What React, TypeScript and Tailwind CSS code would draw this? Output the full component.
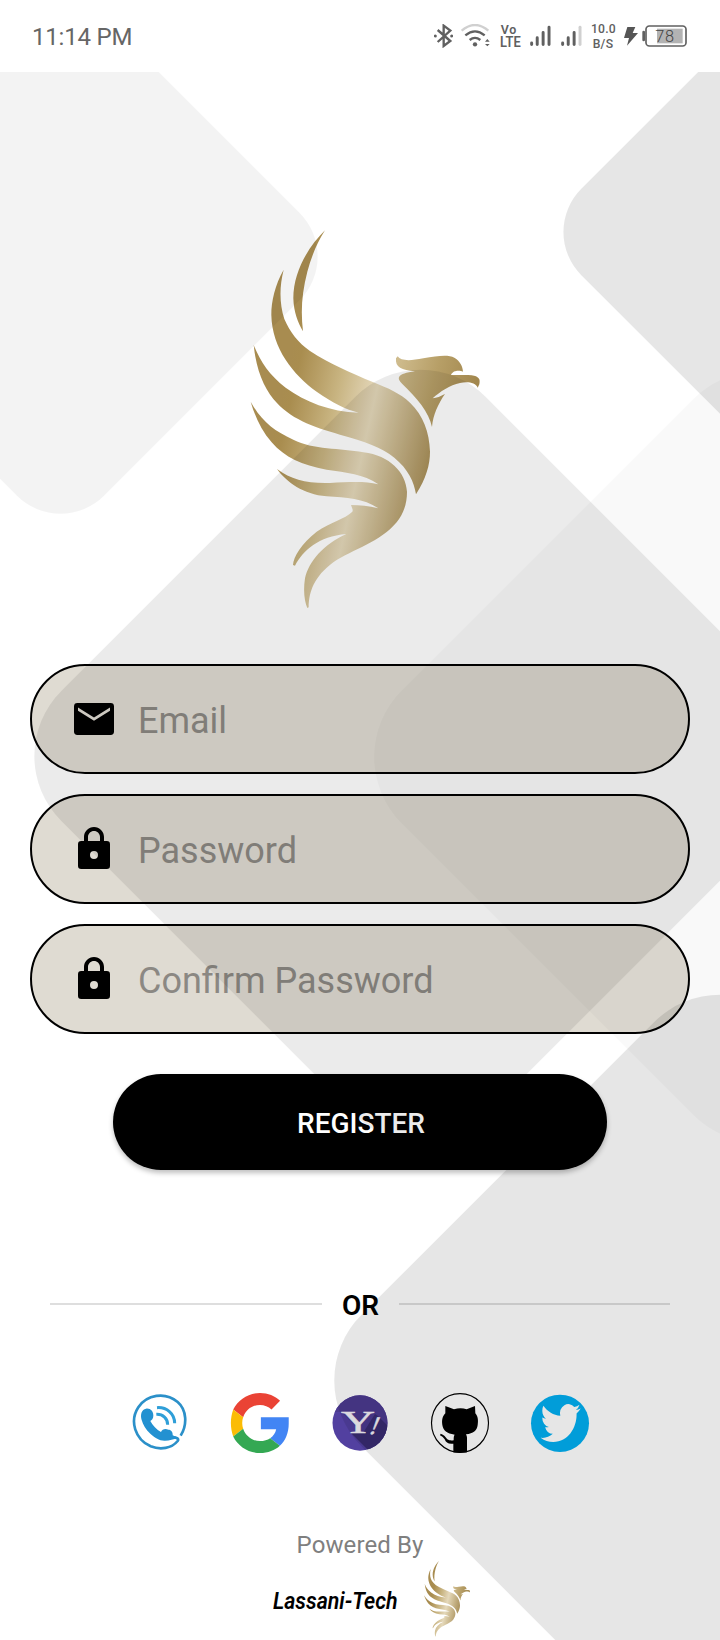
import { useId } from "react";

function Phoenix({ className }: { className: string }) {
  const id = useId().replace(/[^a-zA-Z0-9]/g, "");
  const body = `body${id}`;
  const head = `head${id}`;
  return (
    <svg viewBox="0 0 810 1215" className={className} aria-hidden="true">
      <defs>
        <linearGradient id={body} gradientUnits="userSpaceOnUse" x1="263" y1="60" x2="751" y2="170">
          <stop offset="0" stopColor="#a88c50" />
          <stop offset="0.06" stopColor="#a98d4f" />
          <stop offset="0.18" stopColor="#b79e65" />
          <stop offset="0.32" stopColor="#c8b481" />
          <stop offset="0.48" stopColor="#dccdaa" />
          <stop offset="0.55" stopColor="#e4d8ba" />
          <stop offset="0.63" stopColor="#d9caa6" />
          <stop offset="0.95" stopColor="#aa915b" />
        </linearGradient>
        <linearGradient id={head} gradientUnits="userSpaceOnUse" x1="500" y1="440" x2="740" y2="500">
          <stop offset="0" stopColor="#cfbc8e" />
          <stop offset="0.5" stopColor="#b79f67" />
          <stop offset="1" stopColor="#a2874e" />
        </linearGradient>
      </defs>
      <g fill={`url(#${body})`}>
        <path d="M285 46C235 95 190 170 190 250C191 290 204 325 219 349C212 290 215 235 232 170C245 122 262 82 285 46Z" />
        <path d="M161 164C135 210 124 258 124 300C126 400 190 480 260 530C308 564 348 583 386 593C300 590 225 560 167 518C117 480 92 440 71 390C78 460 100 515 130 552C180 612 245 634 330 659C405 679 455 697 493 728C535 763 552 800 558 838C588 790 600 750 600 710C598 650 580 602 540 563C510 535 475 520 430 502C360 472 300 447 240 408C205 384 180 352 163 312C148 266 148 215 161 164Z" />
        <path d="M62 560C75 605 95 648 125 682C165 728 215 750 290 764C350 773 400 776 445 808C405 798 360 801 300 804C230 806 185 794 141 762C170 802 220 838 290 844C350 848 400 850 445 880C415 872 390 870 363 870C366 880 370 884 367 890C345 912 300 922 260 950C215 985 190 1025 189 1050L195 1052C220 1005 265 965 349 957C280 988 236 1040 225 1090C219 1130 224 1160 232 1179L236 1177C237 1130 252 1085 310 1042C370 1002 450 982 500 922C524 892 531 860 531 830C527 772 480 722 400 712C330 698 250 705 190 674C130 648 92 615 62 560Z" />
      </g>
      <path
        fill={`url(#${head})`}
        d="M503 424C512 438 540 438 580 430C625 422 655 419 673 428C690 438 698 453 699 470C690 467 670 464 663 480C685 481 705 478 725 481C746 484 752 492 748 508L743 518C737 504 715 499 690 504C660 510 630 530 608 550C620 549 632 544 645 537C625 565 609 600 606 636C597 592 560 548 517 507C499 490 500 476 555 469C515 465 495 457 498 430Z"
      />
    </svg>
  );
}

/* Translucent rounded diamonds that tint everything beneath them. */
function Diamonds() {
  return (
    <svg
      viewBox="0 72 720 1568"
      className="pointer-events-none absolute left-0 top-[72px] h-[1568px] w-[720px]"
      aria-hidden="true"
    >
      <rect x="-139.5" y="56.5" width="400" height="400" rx="62" transform="rotate(45 60.5 256.5)" fillOpacity="0.047" />
      <rect x="621" y="32" width="400" height="400" rx="61" transform="rotate(45 821 232)" fillOpacity="0.098" />
      <rect x="120.5" y="456" width="600" height="600" rx="92" transform="rotate(45 420.5 756)" fillOpacity="0.078" />
      <rect x="459.5" y="457" width="600" height="600" rx="94" transform="rotate(45 759.5 757)" fillOpacity="0.024" />
      <rect x="420" y="1080.5" width="600" height="600" rx="93" transform="rotate(45 720 1380.5)" fillOpacity="0.098" />
    </svg>
  );
}

function StatusBar() {
  return (
    <header className="flex h-[72px] shrink-0 items-center pl-8 pr-[33px] text-[#666]">
      <span className="pt-[2px] text-[24px] leading-none tracking-[-0.2px]">11:14 PM</span>
      <div className="ml-auto flex h-6 items-center">
        <svg viewBox="42 72 57 72" className="h-6 w-[19px]" fill="none" stroke="#606060" strokeWidth="7">
          <path d="M53 90L91 123L71 138V77L91 92L53 126" />
          <circle cx="46" cy="108" r="4.500" fill="#606060" stroke="none" />
          <circle cx="95" cy="108" r="4.500" fill="#606060" stroke="none" />
        </svg>
        <svg viewBox="123 72 87 72" className="ml-2 h-6 w-[29px]" fill="none" stroke="#606060" strokeWidth="7">
          <path d="M125 92Q165 58 205 92" stroke="#d0d0d0" />
          <path d="M136 106Q165 82 194 106M149 120Q165 107 181 120" />
          <circle cx="165" cy="133" r="6.500" fill="#606060" stroke="none" />
          <path d="M195 125L202 117L209 125ZM195 132L202 139L209 132Z" fill="#606060" stroke="none" />
        </svg>
        <svg viewBox="238 72 64 72" className="ml-[10px] h-6 w-[21px] overflow-visible" fill="#606060">
          <text x="240" y="103" fontSize="38" fontWeight="600" textLength="48">Vo</text>
          <text x="238" y="141" fontSize="43" fontWeight="600" textLength="63" lengthAdjust="spacingAndGlyphs">LTE</text>
        </svg>
        <svg viewBox="330 72 64 72" className="ml-[9px] h-6 w-[21px]" stroke="#606060" strokeWidth="9" strokeLinecap="round">
          <path d="M335 129V134M352 113V134M370 97V134M388 81V134" />
        </svg>
        <svg viewBox="423 72 64 72" className="ml-[10px] h-6 w-[21px]" stroke="#606060" strokeWidth="9" strokeLinecap="round">
          <path d="M428 129V134M445 113V134M463 97V134" />
          <path d="M481 81V134" stroke="#d0d0d0" />
        </svg>
        <svg viewBox="514 69 76 78" className="ml-[9px] h-[26px] w-[25px] overflow-visible" fill="#606060">
          <text x="514" y="99" fontSize="37" fontWeight="500" textLength="75">10.0</text>
          <text x="519" y="144" fontSize="37" fontWeight="500" textLength="62">B/S</text>
        </svg>
        <svg viewBox="612 78 42 60" className="ml-2 h-5 w-[14px]" fill="#555">
          <path d="M622 81H646L638 99H654L621 137L627 114H612Z" />
        </svg>
        <svg viewBox="667 72 135 72" className="ml-1 h-6 w-[45px]">
          <path d="M672 96V120" stroke="#606060" strokeWidth="8" strokeLinecap="round" />
          <rect x="679" y="78" width="120" height="60" rx="10" fill="none" stroke="#606060" strokeWidth="5" />
          <rect x="712" y="86" width="77" height="44" fill="#b3b3b3" />
          <text x="707" y="125" fontSize="49" fontWeight="300" textLength="56" fill="#444">78</text>
        </svg>
      </div>
    </header>
  );
}

function MailIcon() {
  return (
    <svg viewBox="0 0 24 24" className="size-12 shrink-0">
      <path
        fillRule="evenodd"
        d="M3.700 4H20.300Q22 4 22 5.700V18.300Q22 20 20.300 20H3.700Q2 20 2 18.300V5.700Q2 4 3.700 4ZM4 6.200V7.850L12 12.850L20 7.850V6.200L12 11.200Z"
      />
    </svg>
  );
}

function LockIcon() {
  return (
    <svg viewBox="0 0 24 24" className="size-12 shrink-0">
      <path
        fillRule="evenodd"
        d="M18.400 8H17V6C17 3.240 14.760 1 12 1S7 3.240 7 6V8H5.600Q4 8 4 9.600V20.400Q4 22 5.600 22H18.400Q20 22 20 20.400V9.600Q20 8 18.400 8ZM12 17A2 2 0 1 1 12 13A2 2 0 0 1 12 17ZM15 8H9V6C9 4.340 10.340 3 12 3S15 4.340 15 6Z"
      />
    </svg>
  );
}

function Field({ label, type, icon }: { label: string; type: string; icon: React.ReactNode }) {
  return (
    <label className="flex h-[110px] items-center gap-5 rounded-full border-2 border-black bg-[#dfdbd2] pl-[38px] pr-10">
      {icon}
      <input
        type={type}
        placeholder={label}
        className="w-full bg-transparent pt-1 text-[36px] leading-[44px] outline-none placeholder:text-[#8b8883] placeholder:opacity-100"
      />
    </label>
  );
}

function PhoneIcon() {
  return (
    <svg viewBox="60 69 180 180" className="size-[60px]" fill="none">
      <path d="M212 197C232 165 231 120 203 96C165 64 110 74 85 112C58 153 75 208 122 229C152 241 185 235 203 213C207 207 202 202 187 201" stroke="#2b90c9" strokeWidth="8" />
      <path
        d="M95 150C90 133 95 118 108 116C121 114 130 123 130 137C130 146 125 150 121 153C128 167 140 179 153 186C156 178 166 174 175 179C184 179 189 187 188 196L204 204C190 208 179 212 165 212C150 213 132 202 121 191C107 179 99 164 95 150Z"
        fill="#2391d1"
      />
      <path d="M141 113C170 111 194 131 194 160" stroke="#2f9fd8" strokeWidth="9" />
      <path d="M139 133C159 132 173 146 173 164" stroke="#2f9fd8" strokeWidth="9" />
    </svg>
  );
}

function GoogleIcon() {
  return (
    <svg viewBox="0 0 48 48" preserveAspectRatio="none" className="h-[60px] w-[60px]">
      <path fill="#EA4335" d="M24 9.500c3.540 0 6.710 1.220 9.210 3.600l6.850-6.850C35.900 2.380 30.470 0 24 0 14.620 0 6.510 5.380 2.560 13.220l7.980 6.190C12.430 13.720 17.740 9.500 24 9.500z" />
      <path fill="#4285F4" d="M46.980 24.550c0-1.570 0-3.090 0-5.250H24.700v9.720h12.240c-.58 2.960-2.260 5.480-4.780 7.180l7.730 6c4.510-4.180 7.090-10.360 7.090-17.650z" />
      <path fill="#FBBC05" d="M10.530 28.590c-.48-1.450-.76-2.990-.76-4.590s.27-3.140.76-4.590l-7.980-6.190C1.420 16.460 .7 20.120 .7 24c0 3.880.72 7.540 1.860 10.780l7.970-6.190z" />
      <path fill="#34A853" d="M24 48c6.480 0 11.930-2.130 15.890-5.810l-7.730-6c-2.150 1.450-4.920 2.300-8.160 2.300-6.260 0-11.570-4.220-13.470-9.910l-7.980 6.190C6.510 42.620 14.620 48 24 48z" />
    </svg>
  );
}

function YahooIcon() {
  return (
    <svg viewBox="0 0 60 60" className="size-[60px]">
      <defs>
        <clipPath id="yahoo-disc">
          <ellipse cx="30" cy="30" rx="27.500" ry="27.700" />
        </clipPath>
      </defs>
      <g clipPath="url(#yahoo-disc)">
        <rect width="60" height="60" fill="#5240a0" />
        <path d="M11 19L52 60H60V0H0V19Z" fill="#4c3a90" />
        <path d="M21 40L42 61L70 45L48 23L45 21L33 40Z" fill="#392c72" />
      </g>
      <g fill="#f3f1f8" stroke="#f3f1f8" strokeWidth="0.500" fontFamily="'Liberation Serif', serif">
        <text x="11" y="40" fontSize="32" textLength="34" lengthAdjust="spacingAndGlyphs">Y</text>
        <text x="38" y="41" fontSize="25" transform="translate(16.400 0) skewX(-22)">!</text>
      </g>
    </svg>
  );
}

function GithubIcon() {
  return (
    <svg viewBox="240 69 180 180" className="size-[60px]">
      <ellipse cx="330" cy="159" rx="85.500" ry="88" fill="none" stroke="#000" strokeWidth="3.500" />
      <path d="M286 108L312 118C325 114 338 114 350 118L375 108L376 130C384 140 385 150 383 165C381 182 370 190 348 193C352 200 351 205 351 212V247C335 249 322 249 310 247V221C295 223 288 218 284 208C280 202 275 198 270 196L272 191C282 193 287 202 292 208C298 212 304 212 311 211C311 203 311 198 314 194C290 190 280 182 277 165C275 150 277 140 286 130Z" />
    </svg>
  );
}

function TwitterIcon() {
  return (
    <svg viewBox="540 69 180 180" className="size-[60px]">
      <ellipse cx="630" cy="160" rx="87" ry="86" fill="#02aff1" />
      <path
        fill="#fff"
        transform="translate(572 89) scale(5 5.850)"
        d="M23.953 4.570a10 10 0 01-2.825.775 4.958 4.958 0 002.163-2.723c-.951.555-2.005.959-3.127 1.184a4.920 4.920 0 00-8.384 4.482C7.690 8.095 4.067 6.130 1.640 3.162a4.822 4.822 0 00-.666 2.475c0 1.710.870 3.213 2.188 4.096a4.904 4.904 0 01-2.228-.616v.060a4.923 4.923 0 003.946 4.827 4.996 4.996 0 01-2.212.085 4.936 4.936 0 004.604 3.417 9.867 9.867 0 01-6.102 2.105c-.390 0-.779-.023-1.170-.067a13.995 13.995 0 007.557 2.209c9.053 0 13.998-7.496 13.998-13.985 0-.210 0-.420-.015-.630A9.935 9.935 0 0024 4.590z"
      />
    </svg>
  );
}

export default function App() {
  return (
    <div className="relative flex h-[1640px] w-[720px] flex-col overflow-hidden bg-white font-['Roboto',sans-serif]">
      <StatusBar />
      <main className="flex flex-col">
        <Phoenix className="ml-[230px] mt-[143px] h-[405px] w-[270px]" />
        <form className="mt-[44px] flex flex-col gap-5 px-[30px]">
          <Field label="Email" type="email" icon={<MailIcon />} />
          <Field label="Password" type="password" icon={<LockIcon />} />
          <Field label="Confirm Password" type="password" icon={<LockIcon />} />
          <button
            type="button"
            className="mt-5 h-24 w-[494px] self-center rounded-full bg-black pl-[2px] pt-1 text-[28px] font-medium text-white shadow-[0_3px_5px_rgba(0,0,0,0.25)]"
          >
            REGISTER
          </button>
        </form>
        <div className="mt-[116px] flex h-9 items-center px-[50px]">
          <span className="h-[2px] flex-1 bg-[#dedede]" />
          <span className="w-[77px] pl-px pt-1 text-center text-[28px] font-semibold leading-8 text-black">OR</span>
          <span className="h-[2px] flex-1 bg-[#dedede]" />
        </div>
        <nav className="mt-[71px] flex justify-center gap-10">
          <PhoneIcon />
          <GoogleIcon />
          <YahooIcon />
          <GithubIcon />
          <TwitterIcon />
        </nav>
      </main>
      <footer className="mt-[77px] flex flex-col items-center">
        <p className="h-7 pt-px text-[24px] leading-7 tracking-[0.1px] text-[#7f7f7f]">Powered By</p>
        <div className="flex h-[81px] w-full">
          <p className="ml-[273px] mt-[29px] w-[147px] origin-left scale-x-[0.89] whitespace-nowrap text-[24px] font-semibold italic leading-7 text-black">
            Lassani-Tech
          </p>
          <Phoenix className="h-[81px] w-[54px]" />
        </div>
      </footer>
      <Diamonds />
    </div>
  );
}
